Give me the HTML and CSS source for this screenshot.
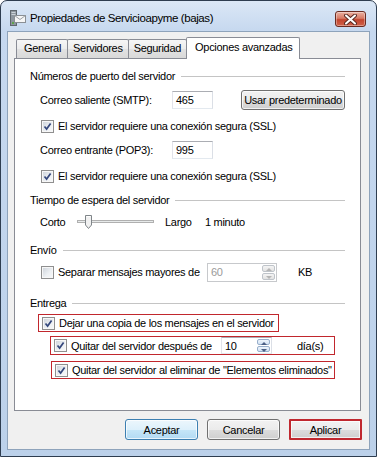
FILE: index.html
```html
<!DOCTYPE html>
<html lang="es">
<head>
  <meta charset="UTF-8" />
  <title>Propiedades de Servicioapyme (bajas)</title>
  <link rel="stylesheet" href="styles.css">
</head>
<body>

  <div class="window">
    <div class="titlebar">
      <svg class="app-icon" width="16" height="17" viewBox="0 0 16 17">
        <rect x="0.5" y="0.5" width="6" height="15" fill="#8d969e" stroke="#5f676e"/>
        <rect x="1.5" y="2" width="4" height="1" fill="#c9d0d6"/>
        <rect x="1.5" y="4" width="4" height="1" fill="#c9d0d6"/>
        <rect x="2" y="12" width="2" height="2" fill="#5fa34a"/>
        <rect x="4.5" y="5.5" width="11" height="7" fill="#f6f6f6" stroke="#8a8f94"/>
        <path d="M4.5 5.5 L10 9.5 L15.5 5.5" fill="none" stroke="#9aa0a6"/>
      </svg>
      <span class="title">Propiedades de Servicioapyme (bajas)</span>
      <div class="close-btn">
        <svg width="13" height="11" viewBox="0 0 13 11">
          <path d="M2 1.5 L11 9.5 M11 1.5 L2 9.5" stroke="#5b2b23" stroke-width="4" stroke-linecap="round"/>
          <path d="M2 1.5 L11 9.5 M11 1.5 L2 9.5" stroke="#ffffff" stroke-width="2" stroke-linecap="round"/>
        </svg>
      </div>
    </div>

    <div class="client">
      <div class="tabs">
        <div class="tab">General</div>
        <div class="tab">Servidores</div>
        <div class="tab">Seguridad</div>
        <div class="tab active">Opciones avanzadas</div>
      </div>

      <div class="panel">
        <!-- Números de puerto -->
        <div class="group-title first">Números de puerto del servidor</div>

        <div class="field-row smtp-row">
          <span class="port-label">Correo saliente (SMTP):</span>
          <span class="textbox port">465</span>
          <span class="btn default-btn">Usar predeterminado</span>
        </div>

        <div class="check-row ssl-1">
          <span class="cb checked"><svg viewBox="0 0 9 9"><path d="M1.5 4.5 L3.6 7 L7.6 1.5" /></svg></span>
          <span>El servidor requiere una conexión segura (SSL)</span>
        </div>

        <div class="field-row pop-row">
          <span class="port-label">Correo entrante (POP3):</span>
          <span class="textbox port">995</span>
        </div>

        <div class="check-row ssl-2">
          <span class="cb checked"><svg viewBox="0 0 9 9"><path d="M1.5 4.5 L3.6 7 L7.6 1.5" /></svg></span>
          <span>El servidor requiere una conexión segura (SSL)</span>
        </div>

        <!-- Tiempo de espera -->
        <div class="group-title timeout-title">Tiempo de espera del servidor</div>

        <div class="field-row slider-row">
          <span class="slider-label">Corto</span>
          <svg class="slider" width="77" height="16" viewBox="0 0 77 16">
            <rect x="0.5" y="6.5" width="76" height="2" fill="#e7eaea" stroke="#b0b0b0"/>
            <path d="M8.5 1.5 H14.5 V11 L11.5 14.5 L8.5 11 Z" fill="#f1f1f1" stroke="#7f8589"/>
            <path d="M9.5 2.5 H13.5" stroke="#ffffff"/>
          </svg>
          <span class="slider-end">Largo</span>
          <span>1 minuto</span>
        </div>

        <!-- Envío -->
        <div class="group-title send-title">Envío</div>

        <div class="field-row split-row">
          <div class="check-row split-check">
            <span class="cb"></span>
            <span>Separar mensajes mayores de</span>
          </div>
          <div class="spinner disabled">
            <span class="spin-value">60</span>
            <span class="spin-buttons">
              <span class="spin-up"></span>
              <span class="spin-down"></span>
            </span>
          </div>
          <span class="unit">KB</span>
        </div>

        <!-- Entrega -->
        <div class="group-title deliver-title">Entrega</div>

        <div class="mark keep-copy">
          <div class="check-row">
            <span class="cb checked"><svg viewBox="0 0 9 9"><path d="M1.5 4.5 L3.6 7 L7.6 1.5" /></svg></span>
            <span>Dejar una copia de los mensajes en el servidor</span>
          </div>
        </div>

        <div class="mark remove-after">
          <div class="check-row">
            <span class="cb checked"><svg viewBox="0 0 9 9"><path d="M1.5 4.5 L3.6 7 L7.6 1.5" /></svg></span>
            <span class="remove-label">Quitar del servidor después de</span>
          </div>
          <div class="spinner days">
            <span class="spin-value">10</span>
            <span class="spin-buttons">
              <span class="spin-up"></span>
              <span class="spin-down"></span>
            </span>
          </div>
          <span class="unit">día(s)</span>
        </div>

        <div class="mark remove-deleted">
          <div class="check-row">
            <span class="cb checked"><svg viewBox="0 0 9 9"><path d="M1.5 4.5 L3.6 7 L7.6 1.5" /></svg></span>
            <span>Quitar del servidor al eliminar de "Elementos eliminados"</span>
          </div>
        </div>
      </div>

      <div class="buttons">
        <span class="btn dialog-btn ok">Aceptar</span>
        <span class="btn dialog-btn">Cancelar</span>
        <span class="btn dialog-btn apply">Aplicar</span>
      </div>
    </div>
  </div>

</body>
</html>
```

FILE: styles.css
```css
* {
  box-sizing: border-box;
}

body {
  margin: 0;
  background-color: #ffffff;
  font-family: "Liberation Sans", Arial, sans-serif;
  font-size: 11px;
  letter-spacing: -0.3px;
  line-height: 14px;
  color: #000;
  white-space: nowrap;
}

.window {
  width: 377px;
  height: 457px;
  display: flex;
  flex-direction: column;
  border: 1px solid #2e3d50;
  border-radius: 7px 7px 0 0;
  background: linear-gradient(#dbe7f6, #c6d8ef 30px, #bcd1ea);
}

/* title bar */

.titlebar {
  height: 30px;
  display: flex;
  align-items: center;
  padding: 4px 9px 0 9px;
}

.app-icon {
  flex: none;
  margin-top: 1px;
}

.title {
  margin-left: 4px;
  font-size: 11.5px;
  letter-spacing: -0.4px;
  color: #000;
}

.close-btn {
  margin-left: auto;
  align-self: flex-start;
  margin-top: 6px;
  margin-right: 1px;
  width: 31px;
  height: 16px;
  display: flex;
  align-items: center;
  justify-content: center;
  border: 1px solid #6a2a20;
  border-radius: 3px;
  background: linear-gradient(#eab1a2, #d77a65 45%, #c2442e 55%, #d0624a);
  box-shadow: inset 0 0 0 1px rgba(255,255,255,0.35);
}

/* client area */

.client {
  flex: 1;
  margin: 0 6px 6px 6px;
  padding: 5px 8px 0 6px;
  background-color: #f0f0f0;
  border: 1px solid #8ea3bb;
}

.tabs {
  height: 22px;
  display: flex;
  align-items: flex-end;
  margin-left: 2px;
}

.tab {
  height: 19px;
  margin-bottom: 1px;
  margin-right: -1px;
  padding: 0 5px;
  line-height: 17px;
  border: 1px solid #898c95;
  border-bottom: none;
  border-radius: 2px 2px 0 0;
  background: linear-gradient(#f6f6f6, #ececec 50%, #e2e2e2 51%, #d9d9d9);
}

.tab:first-child {
  padding: 0 6px 0 7px;
}

.tab.active {
  height: 22px;
  margin-bottom: 0;
  padding: 0 7px 0 8px;
  line-height: 18px;
  background: #ffffff;
  position: relative;
  z-index: 1;
}

.panel {
  height: 353px;
  margin-top: -1px;
  padding: 0 15px;
  background-color: #ffffff;
  border: 1px solid #898c95;
}

/* group headers */

.group-title {
  height: 14px;
  display: flex;
  align-items: center;
  gap: 6px;
}

.group-title::after {
  content: "";
  flex: 1;
  height: 1px;
  margin-top: 1px;
  background-color: #c4c4c4;
}

.group-title.first { margin-top: 10px; }
.group-title.timeout-title { margin-top: 10px; }
.group-title.send-title { margin-top: 11px; }
.group-title.deliver-title { margin-top: 14px; }

/* rows */

.field-row {
  height: 20px;
  display: flex;
  align-items: center;
  padding-left: 10px;
}

.smtp-row { margin-top: 7px; }
.pop-row { margin-top: 7px; }
.slider-row { margin-top: 5px; }
.split-row { margin-top: 5px; }

.check-row {
  height: 14px;
  display: flex;
  align-items: center;
  gap: 4px;
}

.ssl-1 { margin-top: 9px; padding-left: 11px; }
.ssl-2 { margin-top: 9px; padding-left: 11px; }

.port-label {
  width: 132px;
}

.textbox {
  height: 18px;
  padding: 0 3px;
  line-height: 16px;
  border: 1px solid #abadb3;
  border-left-color: #e2e3ea;
  border-right-color: #dbdfe6;
  border-bottom-color: #e3e9ef;
  background-color: #fff;
}

.port {
  width: 41px;
}

/* buttons */

.btn {
  display: flex;
  align-items: center;
  justify-content: center;
  border: 1px solid #707070;
  border-radius: 3px;
  background: linear-gradient(#f2f2f2, #ebebeb 50%, #dddddd 51%, #cfcfcf);
  box-shadow: inset 0 0 0 1px rgba(255,255,255,0.7);
}

.default-btn {
  width: 104px;
  height: 20px;
  margin-left: auto;
}

.buttons {
  display: flex;
  justify-content: flex-end;
  gap: 9px;
  margin-top: 8px;
  margin-right: -1px;
}

.dialog-btn {
  width: 73px;
  height: 21px;
}

.dialog-btn.ok {
  border-color: #3c7fb1;
  background: linear-gradient(#ecf6fc, #ddf0fb 50%, #c6e6f8 51%, #b2daf3);
}

.dialog-btn.apply {
  border: 2px solid #c0282f;
  border-radius: 1px;
}

/* checkbox */

.cb {
  flex: none;
  width: 13px;
  height: 13px;
  padding: 1px;
  border: 1px solid #8f8f8f;
  background: linear-gradient(135deg, #cbd1d8, #eef1f4 60%, #f8f8f8);
  box-shadow: inset 0 0 0 1px #f7f7f7;
}

.cb svg {
  display: block;
  width: 9px;
  height: 9px;
}

.cb svg path {
  fill: none;
  stroke: #34477c;
  stroke-width: 1.7;
}

/* slider */

.slider-label {
  width: 37px;
}

.slider {
  flex: none;
}

.slider-end {
  width: 40px;
  margin-left: 11px;
}

/* spinners */

.split-check {
  width: 167px;
  padding-left: 1px;
}

.spinner {
  height: 19px;
  display: flex;
  border: 1px solid #abadb3;
  border-left-color: #e2e3ea;
  border-bottom-color: #e3e9ef;
  border-right-color: #dbdfe6;
  background-color: #fff;
}

.spinner.disabled {
  width: 70px;
  border-color: #c7c9cc;
  color: #9a9a9a;
}

.spin-value {
  flex: 1;
  padding-left: 3px;
  line-height: 17px;
}

.spin-buttons {
  width: 14px;
  display: flex;
  flex-direction: column;
  padding: 1px 1px 1px 0;
  gap: 1px;
}

.spin-up,
.spin-down {
  flex: 1;
  position: relative;
  border: 1px solid #bfc4ca;
  border-radius: 2px;
  background: linear-gradient(#f4f4f4, #e3e3e3);
}

.spin-up::after,
.spin-down::after {
  content: "";
  position: absolute;
  left: 3px;
  top: 2px;
  border-left: 3px solid transparent;
  border-right: 3px solid transparent;
}

.spin-up::after {
  border-bottom: 3px solid #b5b5b5;
}

.spin-down::after {
  border-top: 3px solid #b5b5b5;
}

.days .spin-up,
.days .spin-down {
  border-color: #97aecb;
  background: linear-gradient(#eef5fc, #d3e2f3);
}

.days .spin-up::after {
  border-bottom-color: #4b5f84;
}

.days .spin-down::after {
  border-top-color: #4b5f84;
}

.split-row .unit {
  margin-left: 21px;
}

/* highlighted options */

.mark {
  display: flex;
  align-items: center;
  border: 1px solid #c1272d;
}

.keep-copy {
  width: 241px;
  height: 18px;
  margin-top: 4px;
  margin-left: 8px;
  padding-left: 3px;
}

.remove-after {
  width: 285px;
  height: 19px;
  margin-top: 4px;
  margin-left: 20px;
  padding-left: 3px;
}

.remove-label {
  width: 150px;
}

.spinner.days {
  width: 51px;
  height: 17px;
}

.remove-after .unit {
  margin-left: 25px;
}

.remove-deleted {
  width: 284px;
  height: 18px;
  margin-top: 6px;
  margin-left: 21px;
  padding-left: 3px;
}
```
